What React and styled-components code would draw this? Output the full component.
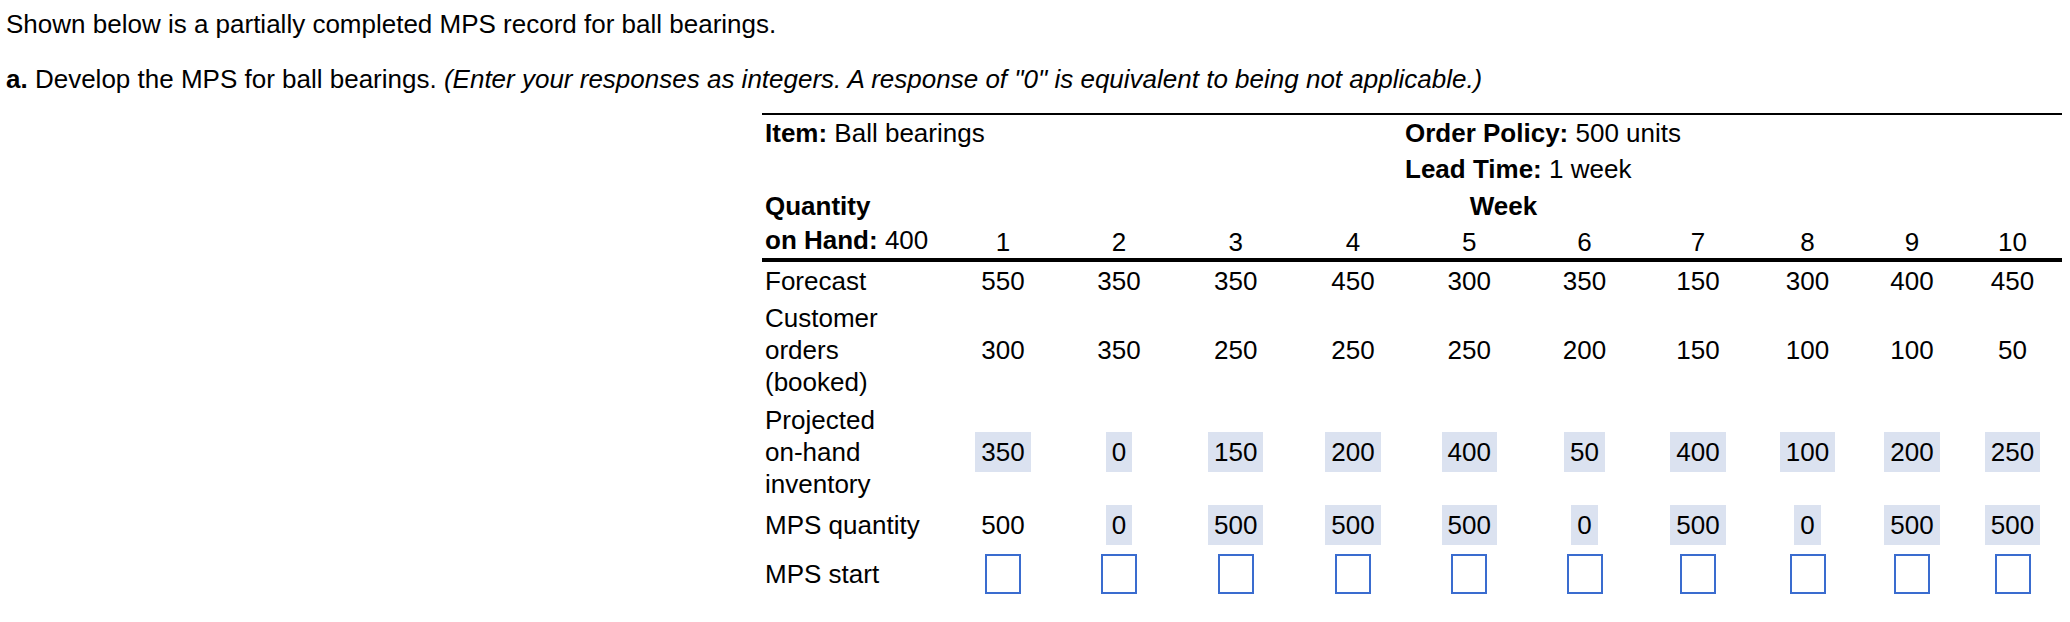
import React from 'react';
import styled, { createGlobalStyle } from 'styled-components';

const GlobalStyle = createGlobalStyle`
  body {
    margin: 0;
    background: #fff;
    color: #000;
    font-family: 'Liberation Sans', Arial, sans-serif;
    font-size: 26px;
  }
`;

const COLS = '183px 116px 116px 117.5px 117px 115.5px 115px 112px 107px 102px 99px';

const Page = styled.div`
  padding: 8px 0 0 6px;
`;

const Para = styled.p`
  margin: 0 0 ${(p) => p.gap}px;
  line-height: 32px;
`;

const Record = styled.div`
  margin-left: 756px;
  width: 1300px;
  border-top: 2px solid #000;
`;

const MetaRow = styled.div`
  display: grid;
  grid-template-columns: 640px 1fr;
  height: 36px;
  line-height: 36px;
  padding-left: 3px;
`;

const Row = styled.div`
  display: grid;
  grid-template-columns: ${COLS};
  align-items: center;
  min-height: ${(p) => p.h || 36}px;
  padding: ${(p) => p.pad || 0}px 0;
  border-bottom: ${(p) => (p.thick ? '4px solid #000' : 'none')};
`;

const Label = styled.div`
  padding-left: 3px;
  line-height: 32px;
  align-self: ${(p) => p.align || 'center'};
`;

const WeekHead = styled.div`
  grid-column: 2 / -1;
  text-align: center;
  font-weight: bold;
  line-height: 32px;
`;

const Cell = styled.div`
  text-align: center;
  line-height: 32px;
  align-self: ${(p) => p.align || 'center'};
`;

const Filled = styled.span`
  display: inline-block;
  background: #dbe2f0;
  padding: 0 6px;
  height: 40px;
  line-height: 40px;
`;

const Blank = styled.input`
  box-sizing: border-box;
  width: 36px;
  height: 40px;
  border: 2px solid #3a6ccf;
  border-radius: 0;
  background: #fff;
  padding: 0;
  margin: 0;
  display: block;
  margin: 0 auto;
`;

const weeks = [1, 2, 3, 4, 5, 6, 7, 8, 9, 10];
const forecast = [550, 350, 350, 450, 300, 350, 150, 300, 400, 450];
const orders = [300, 350, 250, 250, 250, 200, 150, 100, 100, 50];
const onHand = [350, 0, 150, 200, 400, 50, 400, 100, 200, 250];
const mpsQty = [500, 0, 500, 500, 500, 0, 500, 0, 500, 500];

export default function App() {
  return (
    <Page>
      <GlobalStyle />
      <Para gap={23}>Shown below is a partially completed MPS record for ball bearings.</Para>
      <Para gap={18}>
        <b>a.</b> Develop the MPS for ball bearings.{' '}
        <i>(Enter your responses as integers. A response of "0" is equivalent to being not applicable.)</i>
      </Para>
      <Record>
        <MetaRow>
          <span><b>Item:</b> Ball bearings</span>
          <span><b>Order Policy:</b> 500 units</span>
        </MetaRow>
        <MetaRow>
          <span />
          <span><b>Lead Time:</b> 1 week</span>
        </MetaRow>
        <Row h={37}>
          <Label><b>Quantity</b></Label>
          <WeekHead>Week</WeekHead>
        </Row>
        <Row h={34} thick>
          <Label align="start"><b>on Hand:</b> 400</Label>
          {weeks.map((w) => (
            <Cell key={w} align="end">{w}</Cell>
          ))}
        </Row>
        <Row h={37}>
          <Label>Forecast</Label>
          {forecast.map((v, i) => (
            <Cell key={i}>{v}</Cell>
          ))}
        </Row>
        <Row pad={3}>
          <Label>Customer<br />orders<br />(booked)</Label>
          {orders.map((v, i) => (
            <Cell key={i}>{v}</Cell>
          ))}
        </Row>
        <Row pad={3}>
          <Label>Projected<br />on-hand<br />inventory</Label>
          {onHand.map((v, i) => (
            <Cell key={i}><Filled>{v}</Filled></Cell>
          ))}
        </Row>
        <Row h={44}>
          <Label>MPS quantity</Label>
          {mpsQty.map((v, i) => (
            <Cell key={i}>{i === 0 ? v : <Filled>{v}</Filled>}</Cell>
          ))}
        </Row>
        <Row h={54}>
          <Label>MPS start</Label>
          {weeks.map((w) => (
            <Cell key={w}><Blank aria-label={`MPS start week ${w}`} /></Cell>
          ))}
        </Row>
      </Record>
    </Page>
  );
}
